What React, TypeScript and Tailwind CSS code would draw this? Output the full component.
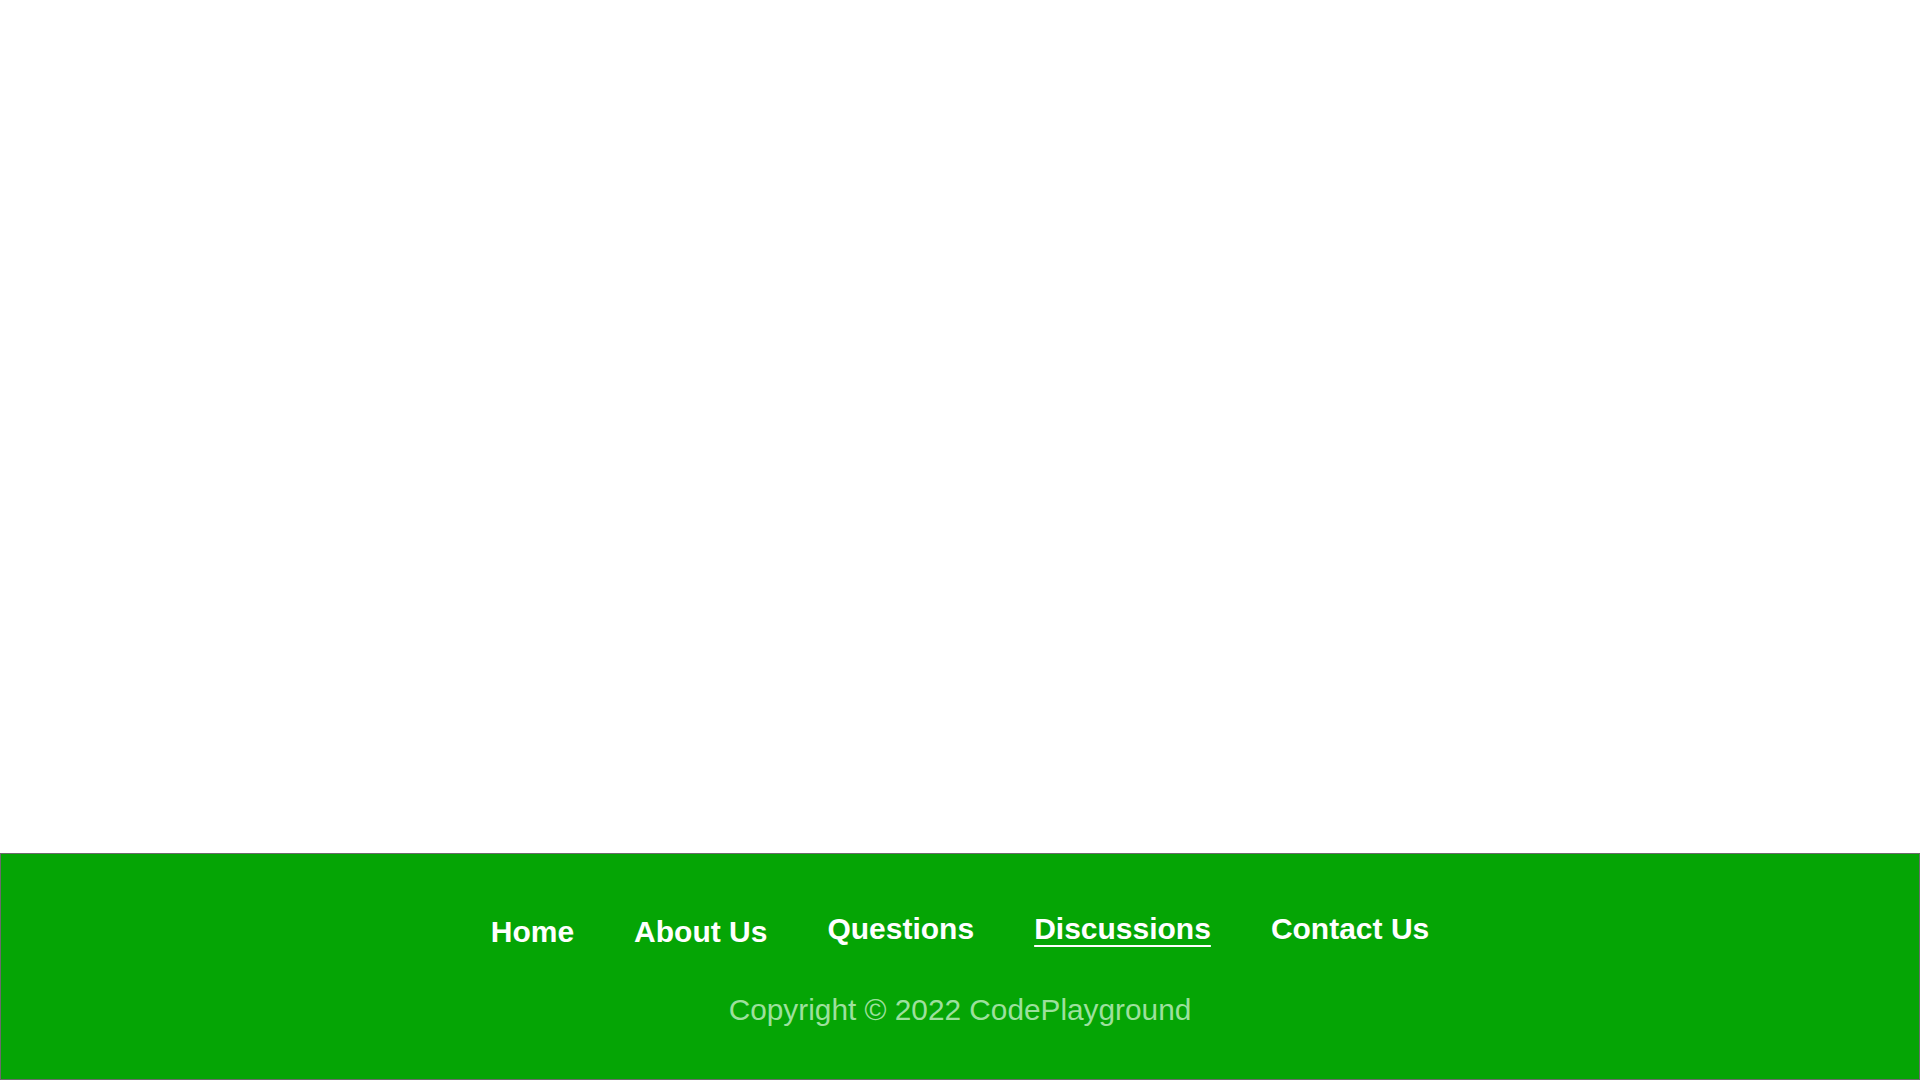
import React from 'react';

const links = [
  { label: 'Home', active: false, shift: true },
  { label: 'About Us', active: false, shift: true },
  { label: 'Questions', active: false, shift: false },
  { label: 'Discussions', active: true, shift: false },
  { label: 'Contact Us', active: false, shift: false },
];

const App: React.FC = () => {
  return (
    <div className="flex min-h-screen flex-col bg-white font-['Liberation_Sans',Arial,sans-serif]">
      {/* Empty page body */}
      <main className="flex-1"></main>

      {/* Footer */}
      <footer className="flex h-[227px] flex-col items-center border border-[#6b6b6b] bg-[#05a505] pt-[58px]">
        <nav className="flex items-start">
          {links.map((link) => (
            <a
              key={link.label}
              href="#"
              className={`mx-[30px] text-[30px] leading-[34px] font-bold text-white ${
                link.active ? 'underline decoration-2 underline-offset-[6px]' : 'no-underline'
              } ${link.shift ? 'mt-[3px]' : ''}`}
            >
              {link.label}
            </a>
          ))}
        </nav>
        <p className="mt-[44px] text-[29.8px] leading-[34px] text-[#9de09d]">
          Copyright © 2022 CodePlayground
        </p>
      </footer>
    </div>
  );
};

export default App;
